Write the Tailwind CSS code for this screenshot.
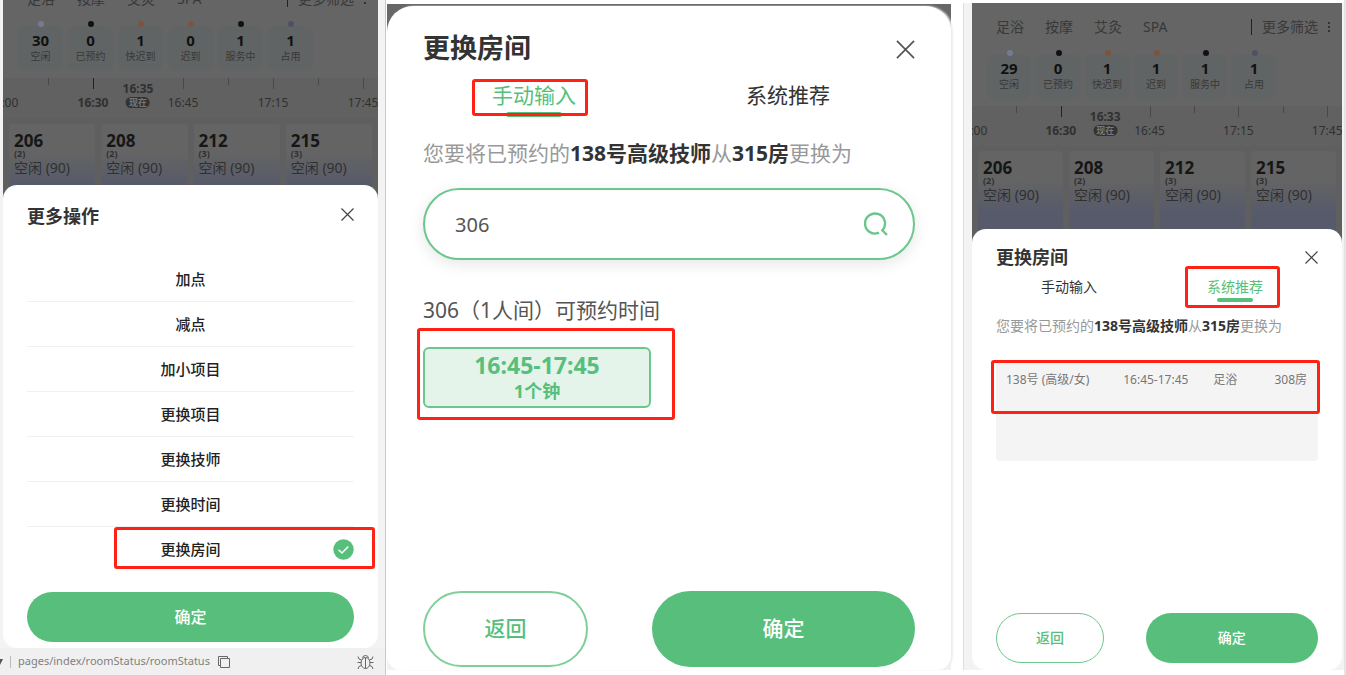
<!DOCTYPE html>
<html lang="zh-CN">
  <head>
    <meta charset="UTF-8" />
    <meta name="viewport" content="width=device-width, initial-scale=1.0" />
    <script src="https://cdn.jsdelivr.net/npm/@tailwindcss/browser@4"></script>
    <title>更换房间</title>
  </head>
  <body
    class="min-h-screen bg-white font-['Noto_Sans','Noto_Sans_CJK_SC',sans-serif] text-[#333]"
  >
    <main
      class="grid min-h-screen grid-cols-[386fr_577fr_383fr] overflow-hidden"
    >
      <!-- more actions -->
      <section
        class="flex min-w-0 flex-col overflow-hidden border-r border-[#c8c8c8] bg-[#f3f3f3]"
      >
        <div class="ml-[3px] mr-[7px] flex flex-1 flex-col">
          <div
            class="-mt-[25px] h-[224px] overflow-hidden bg-[#656565] text-[#383838]"
          >
            <nav class="flex h-12 items-center pl-6 pr-3 text-sm">
              <div class="flex flex-1 gap-[22px]">
                <a href="#">足浴</a>
                <a href="#">按摩</a>
                <a href="#">艾灸</a>
                <a href="#">SPA</a>
              </div>
              <a href="#" class="flex items-center">
                <span class="mr-2.5 h-4 w-px bg-[#222]"></span>更多筛选
                <span class="ml-2.5 flex flex-col gap-0.5">
                  <i class="size-0.5 bg-[#333]"></i>
                  <i class="size-0.5 bg-[#333]"></i>
                  <i class="size-0.5 bg-[#333]"></i>
                </span>
              </a>
            </nav>
            <ul
              class="flex h-[55px] gap-[5px] pl-[15px] pt-[3px] text-center"
            >
              <li class="relative h-[45px] w-[45px] rounded-lg bg-[#616464] pt-1.5">
                <i class="absolute -top-[5px] left-5 size-1.5 rounded-full bg-[#757b90]"></i>
                <b class="block text-[15px] leading-4 text-[#111]">30</b>
                <span class="block text-[10px] leading-4">空闲</span>
              </li>
              <li class="relative h-[45px] w-[45px] rounded-lg bg-[#616464] pt-1.5">
                <i class="absolute -top-[5px] left-5 size-1.5 rounded-full bg-[#111]"></i>
                <b class="block text-[15px] leading-4 text-[#111]">0</b>
                <span class="block text-[10px] leading-4">已预约</span>
              </li>
              <li class="relative h-[45px] w-[45px] rounded-lg bg-[#616464] pt-1.5">
                <i class="absolute -top-[5px] left-5 size-1.5 rounded-full bg-[#7e533d]"></i>
                <b class="block text-[15px] leading-4 text-[#111]">1</b>
                <span class="block text-[10px] leading-4">快迟到</span>
              </li>
              <li class="relative h-[45px] w-[45px] rounded-lg bg-[#616464] pt-1.5">
                <i class="absolute -top-[5px] left-5 size-1.5 rounded-full bg-[#7e533d]"></i>
                <b class="block text-[15px] leading-4 text-[#111]">0</b>
                <span class="block text-[10px] leading-4">迟到</span>
              </li>
              <li class="relative h-[45px] w-[45px] rounded-lg bg-[#616464] pt-1.5">
                <i class="absolute -top-[5px] left-5 size-1.5 rounded-full bg-[#111]"></i>
                <b class="block text-[15px] leading-4 text-[#111]">1</b>
                <span class="block text-[10px] leading-4">服务中</span>
              </li>
              <li class="relative h-[45px] w-[45px] rounded-lg bg-[#616464] pt-1.5">
                <i class="absolute -top-[5px] left-5 size-1.5 rounded-full bg-[#4d5263]"></i>
                <b class="block text-[15px] leading-4 text-[#111]">1</b>
                <span class="block text-[10px] leading-4">占用</span>
              </li>
            </ul>
            <div
              class="relative h-10 bg-[#616161] text-xs leading-4 text-[#303030]"
            >
              <ol class="-ml-[12%] flex h-full w-full text-center">
                <li class="w-[24%] shrink-0 pt-[17px]">16:00</li>
                <li class="relative w-[24%] shrink-0 pt-[17px] font-bold">
                  <i class="absolute left-0 top-0 h-[7px] w-px bg-[#484848]"></i>
                  <i class="absolute left-1/2 top-0 h-[11px] w-px bg-[#222]"></i>
                  16:30
                </li>
                <li class="relative w-[24%] shrink-0 pt-[17px]">
                  <i class="absolute left-1/2 top-0 h-[11px] w-px bg-[#484848]"></i>
                  16:45
                </li>
                <li class="relative w-[24%] shrink-0 pt-[17px]">
                  <i class="absolute left-0 top-0 h-[7px] w-px bg-[#484848]"></i>
                  <i class="absolute left-1/2 top-0 h-[11px] w-px bg-[#484848]"></i>
                  17:15
                </li>
                <li class="relative w-[24%] shrink-0 pt-[17px]">
                  <i class="absolute left-0 top-0 h-[7px] w-px bg-[#484848]"></i>
                  <i class="absolute left-1/2 top-0 h-[11px] w-px bg-[#484848]"></i>
                  17:45
                </li>
              </ol>
              <div
                class="absolute left-[36%] top-[3px] flex -translate-x-1/2 flex-col items-center"
              >
                <b>16:35</b>
                <span
                  class="rounded-full bg-[#333] px-[3px] text-[9px] font-bold leading-[11px] text-[#777]"
                  >现在</span
                >
              </div>
            </div>
            <ul
              class="grid grid-cols-4 gap-1.5 bg-[#5f5f5f] px-1.5 pt-1.5 text-sm text-[#303030]"
            >
              <li class="h-24 rounded bg-linear-to-b from-[#646464] from-30% to-[#565a6a] to-65% pl-[5px] pt-2">
                <b class="block text-[17px] leading-[18px] text-[#161616]">206</b>
                <b class="block text-[9px] leading-2">(2)</b>
                <span class="block leading-5">空闲 (90)</span>
              </li>
              <li class="h-24 rounded bg-linear-to-b from-[#646464] from-30% to-[#565a6a] to-65% pl-[5px] pt-2">
                <b class="block text-[17px] leading-[18px] text-[#161616]">208</b>
                <b class="block text-[9px] leading-2">(2)</b>
                <span class="block leading-5">空闲 (90)</span>
              </li>
              <li class="h-24 rounded bg-linear-to-b from-[#646464] from-30% to-[#565a6a] to-65% pl-[5px] pt-2">
                <b class="block text-[17px] leading-[18px] text-[#161616]">212</b>
                <b class="block text-[9px] leading-2">(3)</b>
                <span class="block leading-5">空闲 (90)</span>
              </li>
              <li class="h-24 rounded bg-linear-to-b from-[#646464] from-30% to-[#565a6a] to-65% pl-[5px] pt-2">
                <b class="block text-[17px] leading-[18px] text-[#161616]">215</b>
                <b class="block text-[9px] leading-2">(3)</b>
                <span class="block leading-5">空闲 (90)</span>
              </li>
            </ul>
          </div>
          <form
            class="relative -mt-3.5 flex flex-1 flex-col rounded-[14px] bg-white px-6 pb-1.5 pt-4"
          >
            <div class="mb-[26px] flex h-[30px] items-center justify-between">
              <h2 class="text-lg font-bold">更多操作</h2>
              <button type="button" aria-label="关闭" class="pb-1">
                <svg class="size-[13px]" viewBox="0 0 13 13" fill="none" stroke="#444" stroke-width="1.2">
                  <path d="M.5.5l12 12M12.5.5l-12 12" />
                </svg>
              </button>
            </div>
            <div class="text-center text-[15px] font-medium text-[#222]">
              <label class="relative block h-[45px] border-b border-[#f0f0f0] leading-[44px]">
                <input type="radio" name="action" class="absolute appearance-none" />加点
              </label>
              <label class="relative block h-[45px] border-b border-[#f0f0f0] leading-[44px]">
                <input type="radio" name="action" class="absolute appearance-none" />减点
              </label>
              <label class="relative block h-[45px] border-b border-[#f0f0f0] leading-[44px]">
                <input type="radio" name="action" class="absolute appearance-none" />加小项目
              </label>
              <label class="relative block h-[45px] border-b border-[#f0f0f0] leading-[44px]">
                <input type="radio" name="action" class="absolute appearance-none" />更换项目
              </label>
              <label class="relative block h-[45px] border-b border-[#f0f0f0] leading-[44px]">
                <input type="radio" name="action" class="absolute appearance-none" />更换技师
              </label>
              <label class="relative block h-[45px] border-b border-[#f0f0f0] leading-[44px]">
                <input type="radio" name="action" class="absolute appearance-none" />更换时间
              </label>
              <label class="relative block h-[45px] leading-[44px]">
                <input type="radio" name="action" class="peer absolute appearance-none" checked />更换房间
                <svg class="absolute right-0 top-3 hidden size-[21px] peer-checked:block" viewBox="0 0 21 21" fill="none">
                  <circle cx="10.500" cy="10.500" r="10.200" fill="#57bf7b" />
                  <path d="M5.500 10.800l3.500 3.300 6.300-6.600" stroke="#fff" stroke-width="1.400" />
                </svg>
                <span class="pointer-events-none absolute -right-[21px] bottom-[3px] left-[87px] top-0 rounded-[3px] border-3 border-[#ff2113]"></span>
              </label>
            </div>
            <button
              type="submit"
              class="mt-auto h-[50px] rounded-full bg-[#57bf7b] text-base font-medium text-white"
            >
              确定
            </button>
          </form>
        </div>
        <footer
          class="flex h-[27px] items-center bg-[#f0f0f0] pr-[11px] text-[11px] text-[#808080]"
        >
          <svg class="h-1.5 w-[3px]" viewBox="0 0 3 6"><path d="M0 0h3L0 6z" fill="#555" /></svg>
          <span class="mx-[7px] h-3 w-px bg-[#bbb]"></span>
          <span>pages/index/roomStatus/roomStatus</span>
          <button type="button" aria-label="复制" class="ml-2">
            <svg class="size-3" viewBox="0 0 12 12" fill="none" stroke="#666">
              <path d="M2.500 9.500h-2v-9h9v2M2.500 2.500h9v9h-9z" />
            </svg>
          </button>
          <button type="button" aria-label="调试" class="ml-auto">
            <svg class="h-4 w-[17px]" viewBox="0 0 17 16" fill="none" stroke="#666">
              <ellipse cx="8.500" cy="9" rx="4.500" ry="5.500" />
              <path d="M8.500 4v10.500M5.500 4.500a3 3 0 016 0M4 8.500H.5M13 8.500h3.500M4.500 6L2 5 1 2.500M12.500 6L15 5l1-2.500M4.500 11.500L2 12.500 1 15M12.500 11.500l2.500 1 1 2.500" />
            </svg>
          </button>
        </footer>
      </section>

      <!-- change room: manual input -->
      <section class="flex min-w-0 flex-col pb-[5px] pl-px pr-3 pt-1">
        <div
          class="flex flex-1 flex-col bg-linear-to-b from-[#666] from-40px to-[#f3f3f3] to-40px pt-0.5"
        >
          <form
            class="flex flex-1 flex-col rounded-t-[26px] rounded-b-[14px] bg-white px-9 pb-[3px] pt-6 shadow-[2px_0_2px_#eee]"
          >
            <div class="flex h-9 items-center justify-between">
              <h2 class="text-[27px] font-bold">更换房间</h2>
              <button type="button" aria-label="关闭" class="pt-0.5">
                <svg class="size-[19px]" viewBox="0 0 20 20" fill="none" stroke="#555" stroke-width="1.800">
                  <path d="M1 1l18 18M19 1L1 19" />
                </svg>
              </button>
            </div>
            <div class="-ml-4 mt-[13px] grid h-[38px] grid-cols-2 justify-items-center text-[21px] leading-8">
              <button type="button" class="relative flex items-start text-[#57bf7b]">
                手动输入
                <span class="absolute bottom-0 left-3.5 right-3.5 h-[5px] rounded bg-[#57bf7b]"></span>
                <span class="absolute -left-5 -right-3 bottom-px top-0 rounded-[3px] border-3 border-[#ff2113]"></span>
              </button>
              <button type="button" class="flex items-start">系统推荐</button>
            </div>
            <p class="mt-5 text-[21px] leading-8 text-[#999]">
              您要将已预约的<b class="text-[#333]">138号高级技师</b>从<b class="text-[#333]">315房</b>更换为
            </p>
            <div class="relative mt-[19px]">
              <input
                type="text"
                aria-label="房间号"
                value="306"
                class="h-[72px] w-full rounded-full border-2 border-[#6cc78c] bg-white pl-[30px] pr-20 text-xl text-[#555] shadow-[0_4px_16px_#0000001a] outline-none"
              />
              <button type="button" aria-label="搜索" class="absolute right-[27px] top-6">
                <svg class="size-6" viewBox="0 0 24 24" fill="none" stroke="#6ac78b" stroke-width="2.400">
                  <path d="M15 20.700a10 10 0 113.200-2.200M17.500 17.500l5.500 5.500" />
                </svg>
              </button>
            </div>
            <p class="mt-[34px] text-[21px] leading-8 text-[#555]">
              306（1人间）可预约时间
            </p>
            <div class="relative mt-[21px] w-[228px]">
              <button
                type="button"
                class="h-[61px] w-full rounded-md border-2 border-[#6cc78c] bg-[#e4f4ea] pb-0.5 font-bold text-[#57bf7b]"
              >
                <span class="block text-[23px] leading-7">16:45-17:45</span>
                <span class="block text-lg leading-6">1个钟</span>
              </button>
              <span class="pointer-events-none absolute -bottom-3 -left-1.5 -right-6 -top-[19px] rounded-[3px] border-3 border-[#ff2113]"></span>
            </div>
            <div class="mt-auto flex h-19 justify-between text-[21px] font-medium">
              <button type="button" class="w-[33.5%] rounded-full border-2 border-[#7fcf9a] text-[#57bf7b]">
                返回
              </button>
              <button type="submit" class="w-[53.5%] rounded-full bg-[#57bf7b] text-white">
                确定
              </button>
            </div>
          </form>
        </div>
      </section>

      <!-- change room: system recommendation -->
      <section class="flex min-w-0 flex-col border-r-2 border-[#e4e4e4] pb-[5px] pt-[3px]">
        <div
          class="flex flex-1 flex-col border-l border-[#dedede] bg-[#f3f3f3] pl-2 pr-0.5"
        >
          <div class="h-[240px] overflow-hidden bg-[#656565] text-[#383838]">
            <nav class="flex h-12 items-center pl-6 pr-3 text-sm">
              <div class="flex flex-1 gap-[21px]">
                <a href="#">足浴</a>
                <a href="#">按摩</a>
                <a href="#">艾灸</a>
                <a href="#">SPA</a>
              </div>
              <a href="#" class="flex items-center">
                <span class="mr-2.5 h-4 w-px bg-[#222]"></span>更多筛选
                <span class="ml-2.5 flex flex-col gap-0.5">
                  <i class="size-0.5 bg-[#333]"></i>
                  <i class="size-0.5 bg-[#333]"></i>
                  <i class="size-0.5 bg-[#333]"></i>
                </span>
              </a>
            </nav>
            <ul
              class="flex h-[55px] gap-[5px] pl-[15px] pt-[3px] text-center"
            >
              <li class="relative h-[45px] w-11 rounded-lg bg-[#616464] pt-1.5">
                <i class="absolute -top-1 left-5 size-1.5 rounded-full bg-[#757b90]"></i>
                <b class="block text-[15px] leading-4 text-[#111]">29</b>
                <span class="block text-[10px] leading-4">空闲</span>
              </li>
              <li class="relative h-[45px] w-11 rounded-lg bg-[#616464] pt-1.5">
                <i class="absolute -top-1 left-5 size-1.5 rounded-full bg-[#111]"></i>
                <b class="block text-[15px] leading-4 text-[#111]">0</b>
                <span class="block text-[10px] leading-4">已预约</span>
              </li>
              <li class="relative h-[45px] w-11 rounded-lg bg-[#616464] pt-1.5">
                <i class="absolute -top-1 left-5 size-1.5 rounded-full bg-[#7e533d]"></i>
                <b class="block text-[15px] leading-4 text-[#111]">1</b>
                <span class="block text-[10px] leading-4">快迟到</span>
              </li>
              <li class="relative h-[45px] w-11 rounded-lg bg-[#616464] pt-1.5">
                <i class="absolute -top-1 left-5 size-1.5 rounded-full bg-[#7e533d]"></i>
                <b class="block text-[15px] leading-4 text-[#111]">1</b>
                <span class="block text-[10px] leading-4">迟到</span>
              </li>
              <li class="relative h-[45px] w-11 rounded-lg bg-[#616464] pt-1.5">
                <i class="absolute -top-1 left-5 size-1.5 rounded-full bg-[#111]"></i>
                <b class="block text-[15px] leading-4 text-[#111]">1</b>
                <span class="block text-[10px] leading-4">服务中</span>
              </li>
              <li class="relative h-[45px] w-11 rounded-lg bg-[#616464] pt-1.5">
                <i class="absolute -top-1 left-5 size-1.5 rounded-full bg-[#4d5263]"></i>
                <b class="block text-[15px] leading-4 text-[#111]">1</b>
                <span class="block text-[10px] leading-4">占用</span>
              </li>
            </ul>
            <div
              class="relative h-10 bg-[#616161] text-xs leading-4 text-[#303030]"
            >
              <ol class="-ml-[12%] flex h-full w-full text-center">
                <li class="w-[24%] shrink-0 pt-[17px]">16:00</li>
                <li class="relative w-[24%] shrink-0 pt-[17px] font-bold">
                  <i class="absolute left-0 top-0 h-[7px] w-px bg-[#484848]"></i>
                  <i class="absolute left-1/2 top-0 h-[11px] w-px bg-[#222]"></i>
                  16:30
                </li>
                <li class="relative w-[24%] shrink-0 pt-[17px]">
                  <i class="absolute left-1/2 top-0 h-[11px] w-px bg-[#484848]"></i>
                  16:45
                </li>
                <li class="relative w-[24%] shrink-0 pt-[17px]">
                  <i class="absolute left-0 top-0 h-[7px] w-px bg-[#484848]"></i>
                  <i class="absolute left-1/2 top-0 h-[11px] w-px bg-[#484848]"></i>
                  17:15
                </li>
                <li class="relative w-[24%] shrink-0 pt-[17px]">
                  <i class="absolute left-0 top-0 h-[7px] w-px bg-[#484848]"></i>
                  <i class="absolute left-1/2 top-0 h-[11px] w-px bg-[#484848]"></i>
                  17:45
                </li>
              </ol>
              <div
                class="absolute left-[36%] top-[3px] flex -translate-x-1/2 flex-col items-center"
              >
                <b>16:33</b>
                <span
                  class="rounded-full bg-[#333] px-[3px] text-[9px] font-bold leading-[11px] text-[#777]"
                  >现在</span
                >
              </div>
            </div>
            <ul
              class="grid grid-cols-4 gap-1.5 bg-[#5f5f5f] px-1.5 pt-[5px] text-sm text-[#303030]"
            >
              <li class="h-24 rounded bg-linear-to-b from-[#646464] from-30% to-[#565a6a] to-65% pl-[5px] pt-2">
                <b class="block text-[17px] leading-[18px] text-[#161616]">206</b>
                <b class="block text-[9px] leading-2">(2)</b>
                <span class="block leading-5">空闲 (90)</span>
              </li>
              <li class="h-24 rounded bg-linear-to-b from-[#646464] from-30% to-[#565a6a] to-65% pl-[5px] pt-2">
                <b class="block text-[17px] leading-[18px] text-[#161616]">208</b>
                <b class="block text-[9px] leading-2">(2)</b>
                <span class="block leading-5">空闲 (90)</span>
              </li>
              <li class="h-24 rounded bg-linear-to-b from-[#646464] from-30% to-[#565a6a] to-65% pl-[5px] pt-2">
                <b class="block text-[17px] leading-[18px] text-[#161616]">212</b>
                <b class="block text-[9px] leading-2">(3)</b>
                <span class="block leading-5">空闲 (90)</span>
              </li>
              <li class="h-24 rounded bg-linear-to-b from-[#646464] from-30% to-[#565a6a] to-65% pl-[5px] pt-2">
                <b class="block text-[17px] leading-[18px] text-[#161616]">215</b>
                <b class="block text-[9px] leading-2">(3)</b>
                <span class="block leading-5">空闲 (90)</span>
              </li>
            </ul>
          </div>
          <form
            class="relative -mt-3.5 flex flex-1 flex-col rounded-[14px] bg-white px-6 pb-[7px] pt-3.5"
          >
            <div class="flex h-7 items-center justify-between">
              <h2 class="text-lg font-bold">更换房间</h2>
              <button type="button" aria-label="关闭">
                <svg class="size-[13px]" viewBox="0 0 13 13" fill="none" stroke="#444" stroke-width="1.200">
                  <path d="M.5.5l12 12M12.5.5l-12 12" />
                </svg>
              </button>
            </div>
            <div class="-ml-2.5 grid h-8 grid-cols-2 justify-items-center text-sm">
              <button type="button">手动输入</button>
              <button type="button" class="relative text-[#57bf7b]">
                系统推荐
                <span class="absolute bottom-px left-2.5 right-2.5 h-1 rounded bg-[#57bf7b]"></span>
                <span class="absolute -bottom-[5px] -left-[22px] -right-[17px] -top-[5px] rounded-[3px] border-3 border-[#ff2113]"></span>
              </button>
            </div>
            <p class="mt-[11px] text-sm leading-6 text-[#999]">
              您要将已预约的<b class="text-[#333]">138号高级技师</b>从<b class="text-[#333]">315房</b>更换为
            </p>
            <div class="relative mt-[23px] h-[100px] rounded bg-[#f4f4f4]">
              <table class="w-full table-fixed text-left text-xs text-[#777]">
                <tbody>
                  <tr class="h-[38px]">
                    <td class="w-[39.5%] pl-2.5">138号 (高级/女)</td>
                    <td class="w-[28%]">16:45-17:45</td>
                    <td>足浴</td>
                    <td class="pr-[11px] text-right">308房</td>
                  </tr>
                </tbody>
              </table>
              <span class="pointer-events-none absolute -left-[5px] -right-0.5 -top-px h-[54px] rounded-[3px] border-3 border-[#ff2113]"></span>
            </div>
            <div class="mt-auto flex h-[50px] justify-between text-sm font-medium">
              <button type="button" class="w-[33.5%] rounded-full border border-[#6cc78c] text-[#57bf7b]">
                返回
              </button>
              <button type="submit" class="w-[53.5%] rounded-full bg-[#57bf7b] text-white">
                确定
              </button>
            </div>
          </form>
        </div>
      </section>
    </main>
  </body>
</html>
